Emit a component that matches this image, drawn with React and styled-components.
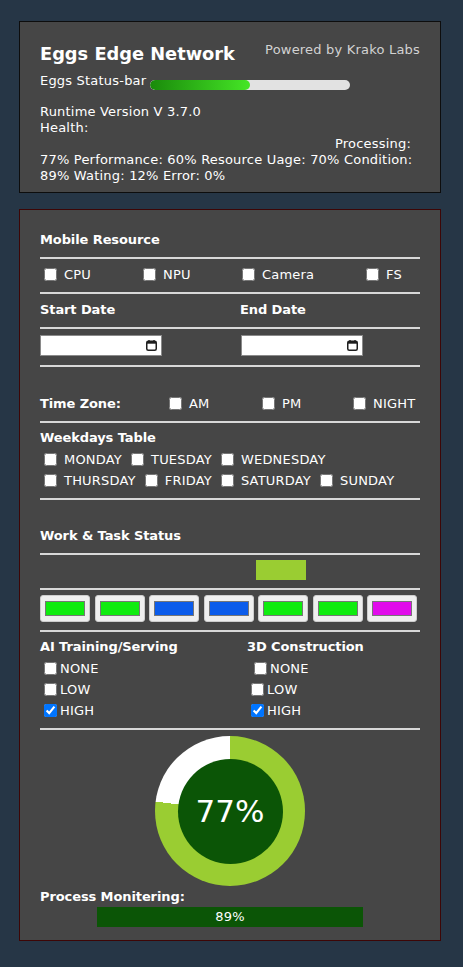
import React from 'react';
import styled, { createGlobalStyle } from 'styled-components';

const GlobalStyle = createGlobalStyle`
  html, body { margin: 0; padding: 0; }
  body {
    background: #263646;
    font-family: "DejaVu Sans", Verdana, sans-serif;
    font-size: 13px;
    letter-spacing: 0.2px;
    color: #fff;
  }
`;

const Page = styled.div`
  display: flex;
  flex-direction: column;
  gap: 16px;
  padding: 21px 0 27px 19px;
`;

const Card = styled.section`
  box-sizing: border-box;
  width: 422px;
  background: #464646;
  border: 1px solid ${p => p.$border};
  padding: ${p => p.$pad};
  display: flex;
  flex-direction: column;
`;

const Header = styled.header`
  display: flex;
  justify-content: space-between;
  align-items: flex-start;
`;

const Title = styled.h1`
  margin: 0;
  font-size: 17.8px;
  line-height: 21px;
  letter-spacing: 0;
  font-weight: bold;
`;

const Powered = styled.span`
  margin-top: -1px;
  line-height: 16px;
  color: #d2d2d2;
`;

const StatusRow = styled.div`
  display: flex;
  align-items: flex-start;
  gap: 4px;
  margin-top: 9px;
  line-height: 16px;
`;

const Track = styled.div`
  width: 200px;
  height: 10px;
  margin-top: 7px;
  border-radius: 5px;
  background: #e2e2e2;
  overflow: hidden;
`;

const Fill = styled.div`
  height: 100%;
  border-radius: 5px;
  background: linear-gradient(to right, #1a8a0b, #45e626);
`;

const Info = styled.div`
  margin-top: 14px;
  line-height: 16px;
`;

const InfoLine = styled.div`
  white-space: nowrap;
  text-align: ${p => (p.$right ? 'right' : 'left')};
  padding-right: ${p => (p.$right ? '9px' : '0')};
`;

const SectionTitle = styled.div`
  font-weight: bold;
  letter-spacing: -0.1px;
  line-height: 16px;
  margin-top: ${p => p.$mt || 0}px;
`;

const Divider = styled.hr`
  border: 0;
  height: 2px;
  background: #d8d8d8;
  margin: ${p => p.$space ?? 9}px 0 5px;
`;

const GridRow = styled.div`
  display: grid;
  grid-template-columns: ${p => p.$cols};
  margin-top: ${p => p.$mt || 0}px;
  line-height: 16px;
`;

const Check = styled.label`
  display: flex;
  align-items: flex-start;
  line-height: 16px;
  white-space: nowrap;
`;

const Box = styled.input.attrs({ type: 'checkbox' })`
  flex: none;
  width: 13px;
  height: 13px;
  margin: 1px ${p => p.$after ?? 7}px 0 ${p => p.$before ?? 4}px;
  accent-color: #0075ff;
`;

const DateField = styled.div`
  box-sizing: border-box;
  width: 122px;
  height: 21px;
  background: #fff;
  border: 1px solid #8a8a8a;
  display: flex;
  align-items: center;
  justify-content: flex-end;
  padding-right: 4px;
  margin-left: ${p => p.$shift || 0}px;
`;

const WeekRows = styled.div`
  display: flex;
  flex-direction: column;
  gap: 5px;
  margin-top: 6px;
`;

const WeekRow = styled.div`
  display: flex;
  gap: 5px;
`;

const LimeRow = styled.div`
  padding-left: 216px;
`;

const LimeBlock = styled.div`
  width: 50px;
  height: 20px;
  background: #9acd32;
`;

const Swatches = styled.div`
  display: flex;
  gap: 4.5px;
`;

const SwatchButton = styled.div`
  box-sizing: border-box;
  width: 50px;
  height: 27px;
  background: #efefef;
  border: 1px solid #cdcdcd;
  border-radius: 3px;
  padding: 5px 4px;
`;

const SwatchColor = styled.div`
  width: 100%;
  height: 100%;
  box-sizing: border-box;
  border: 1px solid #777;
  background: ${p => p.$color};
`;

const Column = styled.div`
  display: flex;
  flex-direction: column;
`;

const Options = styled.div`
  display: flex;
  flex-direction: column;
  gap: 5px;
  margin-top: 6px;
`;

const DonutWrap = styled.div`
  margin-top: 1px;
  display: flex;
  justify-content: center;
`;

const Donut = styled.div`
  width: 150px;
  height: 150px;
  border-radius: 50%;
  background: conic-gradient(#9acd32 0 ${p => p.$pct}%, #fff ${p => p.$pct}% 100%);
  display: grid;
  place-items: center;
`;

const DonutCore = styled.div`
  width: 105px;
  height: 105px;
  border-radius: 50%;
  background: #0b5506;
  display: grid;
  place-items: center;
  font-size: 31px;
  letter-spacing: 0;
  line-height: 1;
  color: #fff;
`;

const ProcessBar = styled.div`
  width: 266px;
  height: 20px;
  margin: 2px auto 0;
  background: #0b5506;
  text-align: center;
  line-height: 20px;
  color: #fff;
`;

const CalendarIcon = () => (
  <svg width="11" height="11" viewBox="0 0 11 11" aria-hidden="true">
    <rect x="0.75" y="1.25" width="9.5" height="9" rx="1.5" fill="none" stroke="#1e1e1e" strokeWidth="1.5" />
    <rect x="1" y="1.5" width="9" height="2.2" fill="#1e1e1e" />
    <path d="M3 0v2M8 0v2" stroke="#1e1e1e" strokeWidth="1.3" />
  </svg>
);

const swatches = ['#10ec10', '#10ec10', '#0c5ceb', '#0c5ceb', '#10ec10', '#10ec10', '#e10ceb'];

export default function App() {
  return (
    <>
      <GlobalStyle />
      <Page>
        <Card $border="#0d0d0d" $pad="21px 20px 8px">
          <Header>
            <Title>Eggs Edge Network</Title>
            <Powered>Powered by Krako Labs</Powered>
          </Header>
          <StatusRow>
            <span>Eggs Status-bar</span>
            <Track>
              <Fill style={{ width: '50%' }} />
            </Track>
          </StatusRow>
          <Info>
            <InfoLine>Runtime Version V 3.7.0</InfoLine>
            <InfoLine>Health:</InfoLine>
            <InfoLine $right>Processing:</InfoLine>
            <InfoLine>77% Performance: 60% Resource Uage: 70% Condition:</InfoLine>
            <InfoLine>89% Wating: 12% Error: 0%</InfoLine>
          </Info>
        </Card>

        <Card $border="#3d0606" $pad="22px 20px 13px">
          <SectionTitle>Mobile Resource</SectionTitle>
          <Divider />
          <GridRow $cols="99px 99px 124px 1fr" $mt={3}>
            <Check><Box />CPU</Check>
            <Check><Box />NPU</Check>
            <Check><Box />Camera</Check>
            <Check><Box />FS</Check>
          </GridRow>
          <Divider />
          <GridRow $cols="200px 1fr" $mt={3}>
            <SectionTitle>Start Date</SectionTitle>
            <SectionTitle>End Date</SectionTitle>
          </GridRow>
          <Divider />
          <GridRow $cols="200px 1fr" $mt={1}>
            <DateField><CalendarIcon /></DateField>
            <DateField $shift={1}><CalendarIcon /></DateField>
          </GridRow>
          <Divider />
          <GridRow $cols="125px 93px 91px 1fr" $mt={24}>
            <SectionTitle>Time Zone:</SectionTitle>
            <Check><Box />AM</Check>
            <Check><Box />PM</Check>
            <Check><Box />NIGHT</Check>
          </GridRow>
          <Divider />
          <SectionTitle $mt={2}>Weekdays Table</SectionTitle>
          <WeekRows>
            <WeekRow>
              <Check><Box />MONDAY</Check>
              <Check><Box />TUESDAY</Check>
              <Check><Box />WEDNESDAY</Check>
            </WeekRow>
            <WeekRow>
              <Check><Box />THURSDAY</Check>
              <Check><Box />FRIDAY</Check>
              <Check><Box />SATURDAY</Check>
              <Check><Box />SUNDAY</Check>
            </WeekRow>
          </WeekRows>
          <Divider />
          <SectionTitle $mt={23}>Work &amp; Task Status</SectionTitle>
          <Divider />
          <LimeRow>
            <LimeBlock />
          </LimeRow>
          <Divider $space={8} />
          <Swatches>
            {swatches.map((c, i) => (
              <SwatchButton key={i}>
                <SwatchColor $color={c} />
              </SwatchButton>
            ))}
          </Swatches>
          <Divider $space={8} />
          <GridRow $cols="207px 1fr" $mt={2}>
            <Column>
              <SectionTitle>AI Training/Serving</SectionTitle>
              <Options>
                <Check><Box $after={3} />NONE</Check>
                <Check><Box $after={3} />LOW</Check>
                <Check><Box $after={3} defaultChecked />HIGH</Check>
              </Options>
            </Column>
            <Column>
              <SectionTitle>3D Construction</SectionTitle>
              <Options>
                <Check><Box $before={7} $after={3} />NONE</Check>
                <Check><Box $after={3} />LOW</Check>
                <Check><Box $after={3} defaultChecked />HIGH</Check>
              </Options>
            </Column>
          </GridRow>
          <Divider />
          <DonutWrap>
            <Donut $pct={77}>
              <DonutCore>77%</DonutCore>
            </Donut>
          </DonutWrap>
          <SectionTitle $mt={3}>Process Monitering:</SectionTitle>
          <ProcessBar>89%</ProcessBar>
        </Card>
      </Page>
    </>
  );
}
